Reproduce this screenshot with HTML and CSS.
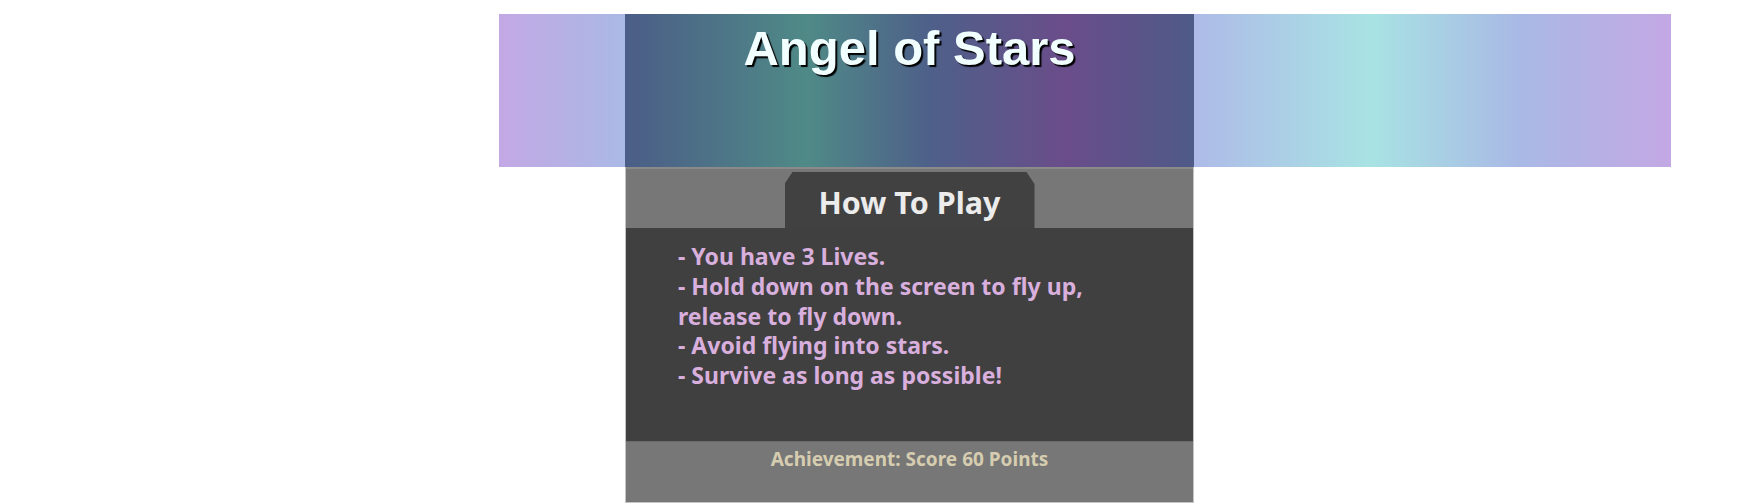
FILE: index.html
```html
<!DOCTYPE html>
<html lang="en">
<head>
<meta charset="utf-8">
<title>Angel of Stars</title>
<link rel="stylesheet" href="styles.css">
</head>
<body>
<div class="stage">
  <div class="band"></div>
  <section class="card">
    <header class="card-head">
      <h1 class="title">Angel of Stars</h1>
    </header>
    <div class="card-body">
      <div class="tab-strip">
        <div class="tab">How To Play</div>
      </div>
      <div class="rules">
        <p>- You have 3 Lives.</p>
        <p>- Hold down on the screen to fly up,<br>release to fly down.</p>
        <p>- Avoid flying into stars.</p>
        <p>- Survive as long as possible!</p>
      </div>
      <footer class="achievement">Achievement: Score 60 Points</footer>
    </div>
  </section>
</div>
</body>
</html>
```

FILE: styles.css
```css
html, body {
  margin: 0;
  padding: 0;
  background: #ffffff;
}

.stage {
  display: grid;
  grid-template-columns: 499px 126px 569px 477px;
  grid-template-rows: 153px auto;
  padding-top: 14px;
}

.band {
  grid-column: 2 / 5;
  grid-row: 1;
  background: linear-gradient(90deg,
    #c3a8e4 0%,
    #aab9e6 10.75%,
    #a8e3e3 26%,
    #b3b0e6 48%,
    #aebae8 59.2%,
    #a8e3e3 74.4%,
    #a9b9e5 87%,
    #c3a8e4 100%);
}

.card {
  grid-column: 3;
  grid-row: 1 / 3;
  width: 569px;
  display: flex;
  flex-direction: column;
  position: relative;
}

.card-head {
  height: 153px;
  box-sizing: border-box;
  padding-top: 6px;
  background: linear-gradient(90deg,
    #4b5d87 0%,
    #4f8a87 31.8%,
    #4e6089 53.6%,
    #6a4d8a 77.5%,
    #4e5a88 100%);
}

.title {
  margin: 0;
  text-align: center;
  font-family: "Liberation Sans", Arial, sans-serif;
  font-weight: 700;
  font-size: 49px;
  color: #f2ffff;
  text-shadow: 2px 2px 1px #000000;
}

.card-body {
  background: #777777;
  border: 1px solid #c4c4c4;
  border-top: 0;
  box-sizing: border-box;
  display: flex;
  flex-direction: column;
  height: 336px;
}

.tab-strip {
  border-top: 2px solid #8a8a8a;
  height: 61px;
  box-sizing: border-box;
  display: flex;
  justify-content: center;
  align-items: flex-end;
}

.tab {
  width: 250px;
  height: 56px;
  background: #414141;
  clip-path: polygon(8px 0, 242px 0, 250px 12px, 250px 100%, 0 100%, 0 12px);
  display: flex;
  align-items: center;
  justify-content: center;
  padding-top: 3px;
  box-sizing: border-box;
  font-family: "Noto Sans", "Open Sans", sans-serif;
  font-weight: 700;
  font-size: 30.5px;
  color: #ececec;
}

.rules {
  background: #404040;
  height: 213px;
  box-sizing: border-box;
  padding: 14px 0 0 52px;
  font-family: "Noto Sans", "Open Sans", sans-serif;
  font-weight: 700;
  font-size: 23px;
  line-height: 29.8px;
  color: #d8afdd;
}

.rules p {
  margin: 0;
}

.achievement {
  flex: 1;
  border-top: 1px solid #6a6a6a;
  padding-top: 5px;
  text-align: center;
  font-family: "Noto Sans", "Open Sans", sans-serif;
  font-weight: 700;
  font-size: 19px;
  line-height: 24px;
  color: #d6cdb0;
}
```
